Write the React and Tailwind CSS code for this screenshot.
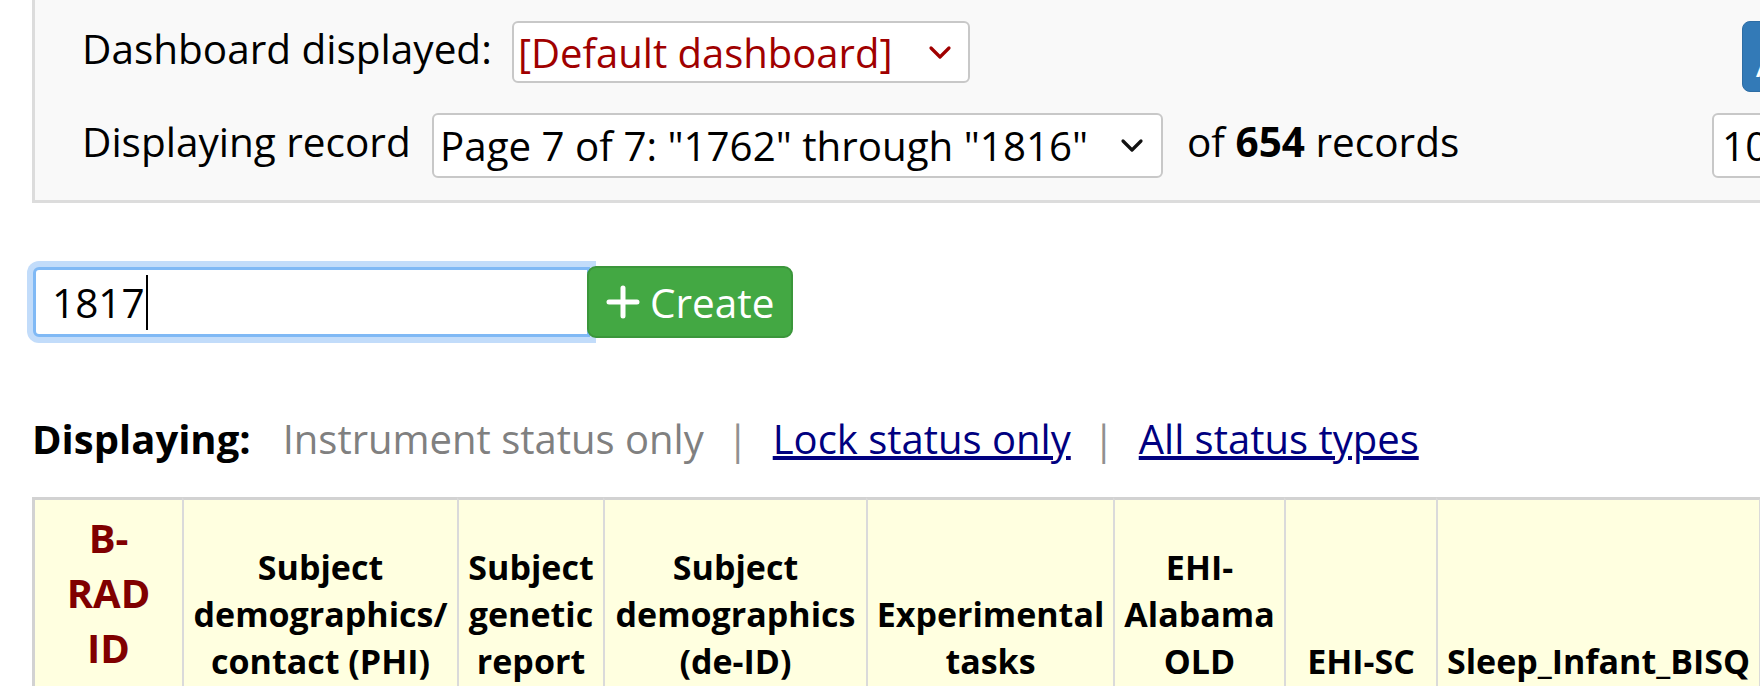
import React from "react";

function Chevron({ color }) {
  return (
    <svg width="24" height="15" viewBox="0 0 24 15" className="shrink-0">
      <polyline points="3,3 12,12 21,3" fill="none" stroke={color} strokeWidth="3.2" strokeLinecap="round" strokeLinejoin="round" />
    </svg>
  );
}

const cols = [
  { w: "w-[150px]", lines: ["B-", "RAD", "ID"], first: true },
  { w: "w-[275px]", lines: ["Subject", "demographics/", "contact (PHI)"] },
  { w: "w-[146px]", lines: ["Subject", "genetic", "report"] },
  { w: "w-[263px]", lines: ["Subject", "demographics", "(de-ID)"] },
  { w: "w-[247px]", lines: ["Experimental", "tasks"] },
  { w: "w-[171px]", lines: ["EHI-", "Alabama", "OLD"] },
  { w: "w-[152px]", lines: ["EHI-SC"] },
  { w: "w-[325px]", lines: ["Sleep_Infant_BISQ"], last: true },
];

export default function App() {
  return (
    <div className="w-[1760px] h-[686px] overflow-hidden bg-white font-['Open_Sans',sans-serif] text-black text-[40.5px] leading-[normal]">
      {/* top panel */}
      <div className="ml-[32px] -mt-[20px] w-[1900px] border-[3px] border-[#dcdcdc] bg-[#f9f9f9] pt-[38px] pb-[22px]">
        <div className="flex items-start pl-[47px]">
          <div className="w-[430px] shrink-0 whitespace-nowrap">Dashboard displayed:</div>
          <div className="w-[458px] h-[62px] shrink-0 border-2 border-[#c8c8c8] rounded-[6px] bg-white flex items-center pl-[4px] pr-[16px] text-[#a00000] text-[40px] whitespace-nowrap">
            <span>[Default dashboard]</span>
            <span className="ml-auto"><Chevron color="#a00000" /></span>
          </div>
          <div className="ml-auto w-[187px] h-[71px] shrink-0 bg-[#337ab7] border border-[#2e6da4] rounded-[8px] text-white pl-[13px] pt-[12px] whitespace-nowrap overflow-hidden">
            Add
          </div>
        </div>
        <div className="flex items-start pl-[47px] mt-[21px]">
          <div className="w-[350px] shrink-0 whitespace-nowrap mt-[1px]">Displaying record</div>
          <div className="w-[731px] h-[65px] shrink-0 border-2 border-[#c8c8c8] rounded-[6px] bg-white flex items-center pl-[6px] pr-[17px] text-[40.3px] whitespace-nowrap">
            <span>Page 7 of 7: "1762" through "1816"</span>
            <span className="ml-auto"><Chevron color="#111111" /></span>
          </div>
          <div className="ml-[24px] mt-[1px] whitespace-nowrap">
            of <b>654</b> records
          </div>
          <div className="ml-auto w-[217px] h-[65px] shrink-0 border-2 border-[#c8c8c8] rounded-[6px] bg-white flex items-center pl-[8px] whitespace-nowrap">
            100
          </div>
        </div>
      </div>

      {/* create record */}
      <div className="ml-[33px] mt-[63px] flex items-start">
        <div className="w-[557px] h-[70px] mt-[1px] shrink-0 border-[3px] border-[#80b9f5] rounded-l-[6px] shadow-[0_0_0_6px_#c2dcfa] bg-white flex items-center pl-[16px]">
          <span>1817</span>
          <span className="inline-block w-[2px] h-[55px] bg-black ml-[1px]"></span>
        </div>
        <div className="relative z-10 -ml-[3px] w-[206px] h-[72px] shrink-0 bg-[#43a843] border-2 border-[#3b963b] rounded-[9px] flex items-center pl-[17px] text-white whitespace-nowrap">
          <svg width="34" height="34" viewBox="0 0 34 34" className="shrink-0">
            <path d="M17 3 V31 M3 17 H31" stroke="#ffffff" strokeWidth="5" strokeLinecap="round" fill="none" />
          </svg>
          <span className="ml-[10px]">Create</span>
        </div>
      </div>

      {/* displaying */}
      <div className="ml-[32px] mt-[73px] whitespace-nowrap flex items-baseline text-[40px]">
        <b>Displaying:</b>
        <span className="ml-[32px] text-[#808080]">Instrument status only</span>
        <span className="ml-[23px] text-[#909090]">|</span>
        <a className="ml-[24px] text-[#000080] underline">Lock status only</a>
        <span className="ml-[22px] text-[#909090]">|</span>
        <a className="ml-[24px] text-[#000080] underline">All status types</a>
      </div>

      {/* table header */}
      <div className="ml-[32px] mt-[31px] flex">
        {cols.map((c, i) => (
          <div
            key={i}
            className={
              c.w +
              " h-[200px] shrink-0 bg-[#ffffe0] border-t-[3px] border-t-[#d2d2d2] flex flex-col justify-end items-center text-center font-bold whitespace-nowrap " +
              (c.first
                ? "border-l-[3px] border-l-[#d2d2d2] text-[#800000] text-[40px] pb-[22px]"
                : "border-l-2 border-l-[#dadada] text-[34px] leading-[47px] pb-[12px]") +
              (c.last ? " border-r-2 border-r-[#dadada]" : "")
            }
          >
            {c.lines.map((l, j) => (
              <div key={j}>{l}</div>
            ))}
          </div>
        ))}
      </div>
    </div>
  );
}
